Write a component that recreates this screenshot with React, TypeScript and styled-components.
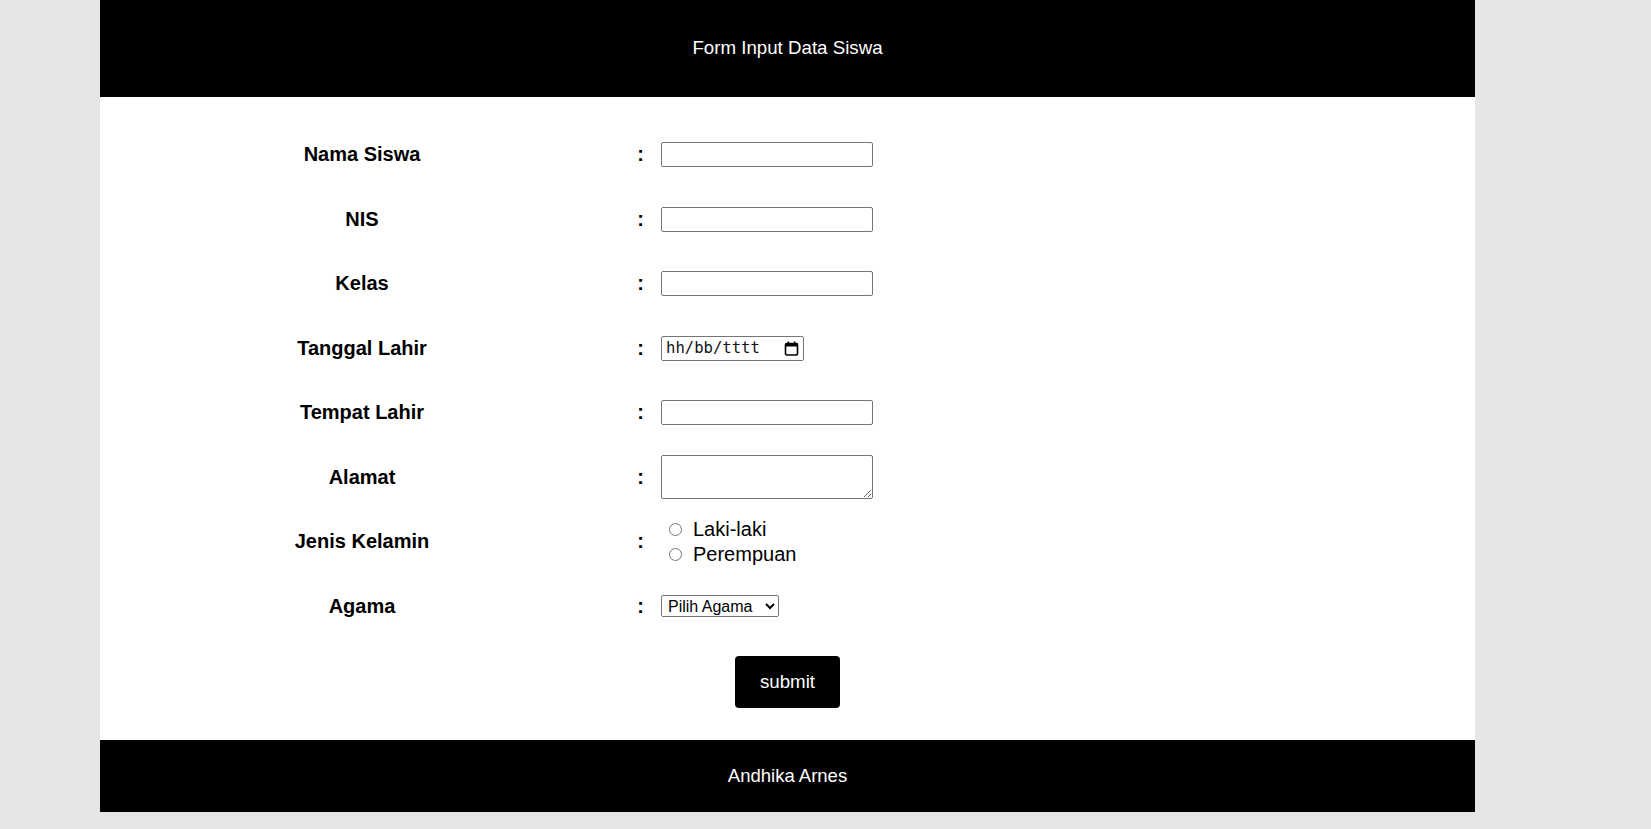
import React from "react";
import styled, { createGlobalStyle } from "styled-components";

const GlobalStyle = createGlobalStyle`
  html, body {
    margin: 0;
    padding: 0;
    background: #e6e6e6;
    font-family: "Liberation Sans", Arial, sans-serif;
  }
`;

const Page = styled.div`
  width: 1375px;
  margin-left: 100px;
  display: flex;
  flex-direction: column;
`;

const Header = styled.header`
  box-sizing: border-box;
  height: 97px;
  padding-bottom: 2px;
  background: #000;
  color: #fff;
  display: flex;
  align-items: center;
  justify-content: center;
  font-size: 18.72px;
`;

const Footer = styled.footer`
  height: 72px;
  background: #000;
  color: #fff;
  display: flex;
  align-items: center;
  justify-content: center;
  font-size: 18.5px;
`;

const Main = styled.form`
  background: #fff;
  padding: 25.5px 0 32px;
  display: flex;
  flex-direction: column;
`;

const Grid = styled.div`
  margin-left: 123px;
  display: grid;
  grid-template-columns: 278px 160px 1fr;
  grid-auto-rows: 64.5px;
  align-items: center;
`;

const Label = styled.label`
  text-align: center;
  font-weight: bold;
  font-size: 20px;
  color: #000;
`;

const Colon = styled.span`
  justify-self: end;
  padding-right: 17px;
  font-weight: bold;
  font-size: 20px;
`;

const Field = styled.div`
  display: flex;
  flex-direction: column;
  align-items: flex-start;
`;

const TextInput = styled.input`
  box-sizing: border-box;
  width: 212px;
  height: 25px;
  margin: 0;
  padding: 1px 3px;
  border: 1px solid #767676;
  border-radius: 2px;
  font-family: "Liberation Sans", Arial, sans-serif;
  font-size: 16px;
  background: #fff;
`;

const TextArea = styled.textarea`
  box-sizing: border-box;
  width: 212px;
  height: 44px;
  margin: 0;
  padding: 2px 3px;
  border: 1px solid #767676;
  border-radius: 2px;
  font-family: "Liberation Sans", Arial, sans-serif;
  font-size: 16px;
`;

const DateBox = styled.label`
  box-sizing: border-box;
  width: 143px;
  height: 25px;
  border: 1px solid #767676;
  border-radius: 2px;
  display: flex;
  align-items: center;
  padding: 0 4px 0 4px;
  background: #fff;
`;

const DateText = styled.input`
  flex: 1;
  min-width: 0;
  border: none;
  outline: none;
  padding: 0;
  margin: 0;
  font-family: "DejaVu Sans Mono", "Liberation Mono", monospace;
  font-size: 15.6px;
  color: #111;
  background: transparent;
  &::placeholder {
    color: #111;
    opacity: 1;
  }
`;

const CalIcon = styled.svg`
  width: 15px;
  height: 15px;
  flex: none;
`;

const Options = styled.div`
  display: flex;
  flex-direction: column;
`;

const Option = styled.label`
  display: flex;
  align-items: center;
  height: 25px;
  font-size: 20px;
  color: #000;
`;

const Radio = styled.input`
  width: 13px;
  height: 13px;
  margin: 0 11px 0 8px;
`;

const Select = styled.select`
  box-sizing: border-box;
  width: 118px;
  height: 22px;
  margin: 0;
  padding: 0 0 0 2px;
  font-family: "Liberation Sans", Arial, sans-serif;
  font-size: 16px;
  color: #000;
  border: 1px solid #767676;
  border-radius: 2px;
  background: #fff;
`;

const SubmitButton = styled.button`
  align-self: center;
  margin-top: 17.5px;
  width: 105px;
  height: 52px;
  background: #000;
  color: #fff;
  border: none;
  border-radius: 4px;
  font-family: "Liberation Sans", Arial, sans-serif;
  font-size: 18.72px;
  cursor: pointer;
`;

const textFields = [
  { id: "nama", label: "Nama Siswa" },
  { id: "nis", label: "NIS" },
  { id: "kelas", label: "Kelas" },
];

export default function App() {
  return (
    <>
      <GlobalStyle />
      <Page>
        <Header>Form Input Data Siswa</Header>
        <Main onSubmit={(e) => e.preventDefault()}>
          <Grid>
            {textFields.map((f) => (
              <React.Fragment key={f.id}>
                <Label htmlFor={f.id}>{f.label}</Label>
                <Colon>:</Colon>
                <Field>
                  <TextInput id={f.id} type="text" />
                </Field>
              </React.Fragment>
            ))}

            <Label htmlFor="tgl">Tanggal Lahir</Label>
            <Colon>:</Colon>
            <Field>
              <DateBox>
                <DateText id="tgl" type="text" placeholder="hh/bb/tttt" />
                <CalIcon viewBox="0 0 15 15" aria-hidden="true">
                  <rect x="1.5" y="2.5" width="12" height="11.5" rx="1.2" fill="none" stroke="#000" strokeWidth="1.6" />
                  <rect x="1.5" y="2.5" width="12" height="3" fill="#000" />
                  <rect x="3.6" y="0.5" width="1.6" height="3" fill="#000" />
                  <rect x="9.8" y="0.5" width="1.6" height="3" fill="#000" />
                </CalIcon>
              </DateBox>
            </Field>

            <Label htmlFor="tempat">Tempat Lahir</Label>
            <Colon>:</Colon>
            <Field>
              <TextInput id="tempat" type="text" />
            </Field>

            <Label htmlFor="alamat">Alamat</Label>
            <Colon>:</Colon>
            <Field>
              <TextArea id="alamat" />
            </Field>

            <Label>Jenis Kelamin</Label>
            <Colon>:</Colon>
            <Options>
              <Option>
                <Radio type="radio" name="jk" value="L" />
                Laki-laki
              </Option>
              <Option>
                <Radio type="radio" name="jk" value="P" />
                Perempuan
              </Option>
            </Options>

            <Label htmlFor="agama">Agama</Label>
            <Colon>:</Colon>
            <Field>
              <Select id="agama" defaultValue="">
                <option value="">Pilih Agama</option>
                <option value="islam">Islam</option>
                <option value="kristen">Kristen</option>
                <option value="katolik">Katolik</option>
                <option value="hindu">Hindu</option>
                <option value="buddha">Buddha</option>
              </Select>
            </Field>
          </Grid>
          <SubmitButton type="submit">submit</SubmitButton>
        </Main>
        <Footer>Andhika Arnes</Footer>
      </Page>
    </>
  );
}
